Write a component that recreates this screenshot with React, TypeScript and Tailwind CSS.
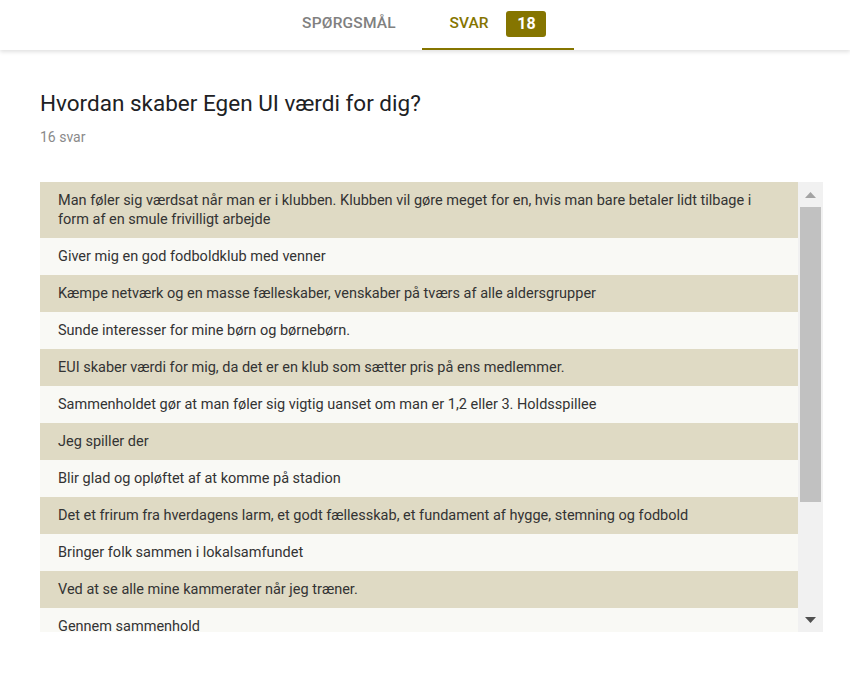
const answers = [
  "Man føler sig værdsat når man er i klubben. Klubben vil gøre meget for en, hvis man bare betaler lidt tilbage i form af en smule frivilligt arbejde",
  "Giver mig en god fodboldklub med venner",
  "Kæmpe netværk og en masse fælleskaber, venskaber på tværs af alle aldersgrupper",
  "Sunde interesser for mine børn og børnebørn.",
  "EUI skaber værdi for mig, da det er en klub som sætter pris på ens medlemmer.",
  "Sammenholdet gør at man føler sig vigtig uanset om man er 1,2 eller 3. Holdsspillee",
  "Jeg spiller der",
  "Blir glad og opløftet af at komme på stadion",
  "Det et frirum fra hverdagens larm, et godt fællesskab, et fundament af hygge, stemning og fodbold",
  "Bringer folk sammen i lokalsamfundet",
  "Ved at se alle mine kammerater når jeg træner.",
  "Gennem sammenhold",
];

export default function App() {
  return (
    <div className="min-h-[687px] bg-white font-['Roboto',sans-serif]">
      {/* faner */}
      <div className="relative z-10 flex h-[50px] justify-center bg-white shadow-[0_2px_4px_rgba(0,0,0,0.12)]">
        <div className="flex">
          <div className="flex w-[146px] items-center justify-center pb-[2px] text-[15.5px] font-medium tracking-[0.2px] text-[#808080]">
            SPØRGSMÅL
          </div>
          <div className="flex w-[152px] items-center justify-center gap-[18px] border-b-2 border-[#857500] text-[15.5px] font-medium text-[#857500]">
            <span>SVAR</span>
            <span className="flex h-[26px] w-[40px] items-center justify-center rounded-[3px] bg-[#857500] text-[16px] font-bold text-white">
              18
            </span>
          </div>
        </div>
      </div>

      <div className="px-10 pt-[40px]">
        <h1 className="text-[22.5px] leading-[26px] text-[#202124]">Hvordan skaber Egen UI værdi for dig?</h1>
        <p className="mt-[11px] text-[14px] text-[#8a8a8a]">16 svar</p>

        <div className="mt-[34px] flex h-[450px] w-[783px] overflow-hidden">
          <div className="flex-1 overflow-hidden">
            {answers.map((a, i) => (
              <div
                key={i}
                className={`py-[9px] pl-[18px] pr-[36px] text-[14.5px] leading-[19px] text-[#333] ${
                  i % 2 === 0 ? "bg-[#dfdac4]" : "bg-[#f9f9f5]"
                }`}
              >
                {a}
              </div>
            ))}
          </div>
          {/* rullebjælke */}
          <div className="flex w-[25px] flex-col items-center bg-[#f1f1f1]">
            <div className="flex h-[25px] w-full items-center justify-center">
              <svg width="11" height="6" viewBox="0 0 11 6">
                <path d="M5.5 0 L11 6 L0 6 Z" fill="#a3a3a3" />
              </svg>
            </div>
            <div className="h-[295px] w-[21px] bg-[#c1c1c1]" />
            <div className="flex-1" />
            <div className="flex h-[25px] w-full items-center justify-center">
              <svg width="11" height="6" viewBox="0 0 11 6">
                <path d="M0 0 L11 0 L5.5 6 Z" fill="#505050" />
              </svg>
            </div>
          </div>
        </div>
      </div>
    </div>
  );
}
